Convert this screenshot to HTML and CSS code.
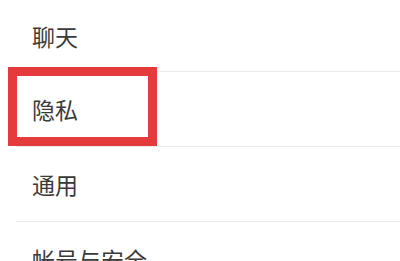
FILE: index.html
```html
<!DOCTYPE html>
<html lang="zh-CN">
<head>
<meta charset="utf-8">
<link rel="stylesheet" href="styles.css">
</head>
<body>
<div class="settings">
  <div class="row first">聊天</div>
  <div class="row">隐私</div>
  <div class="row">通用</div>
  <div class="row">帐号与安全</div>
  <div class="highlight"></div>
</div>
</body>
</html>
```
FILE: styles.css
```css
html, body {
  margin: 0;
  padding: 0;
  background: #ffffff;
}
.settings {
  position: relative;
  width: 400px;
  height: 261px;
  overflow: hidden;
  font-family: "Noto Sans CJK SC", "Noto Sans", sans-serif;
}
.row {
  box-sizing: border-box;
  height: 75px;
  margin-left: 16px;
  padding-left: 16px;
  display: flex;
  align-items: center;
  font-size: 23px;
  color: #3a3a3a;
  border-bottom: 1.5px solid #ebebeb;
}
.row.first {
  height: 72px;
}
.highlight {
  position: absolute;
  left: 8px;
  top: 67px;
  width: 149px;
  height: 79px;
  box-sizing: border-box;
  border: 9px solid #e63b3d;
}
```
